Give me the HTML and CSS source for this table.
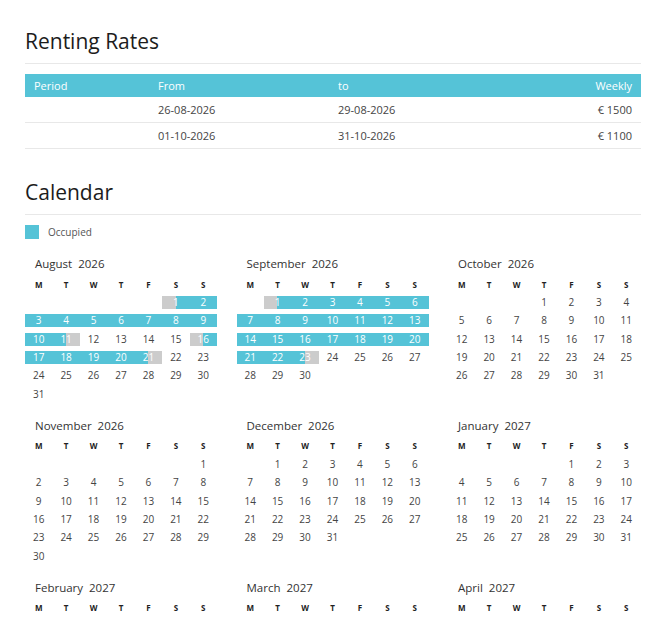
FILE: index.html
```html
<!DOCTYPE html>
<html>
<head>
<meta charset="utf-8">
<title>Renting Rates</title>
<link rel="stylesheet" href="styles.css">
</head>
<body>
<div class="page">
  <h2 class="heading">Renting Rates</h2>
  <hr class="rule">
  <table class="rates">
    <thead>
      <tr><th class="c1">Period</th><th class="c2">From</th><th class="c3">to</th><th class="c4">Weekly</th></tr>
    </thead>
    <tbody>
      <tr><td></td><td>26-08-2026</td><td>29-08-2026</td><td class="c4">€ 1500</td></tr>
      <tr><td></td><td>01-10-2026</td><td>31-10-2026</td><td class="c4">€ 1100</td></tr>
    </tbody>
  </table>

  <h2 class="heading cal-heading">Calendar</h2>
  <hr class="rule">
  <div class="legend"><span class="swatch"></span><span class="legend-label">Occupied</span></div>

  <div class="months">
    <div class="month">
      <div class="mtitle">August <span class="yr">2026</span></div>
      <div class="days">
        <span class="wd">M</span><span class="wd">T</span><span class="wd">W</span><span class="wd">T</span><span class="wd">F</span><span class="wd">S</span><span class="wd">S</span>
        <span></span><span></span><span></span><span></span><span></span><span class="s">1</span><span class="o">2</span>
        <span class="o">3</span><span class="o">4</span><span class="o">5</span><span class="o">6</span><span class="o">7</span><span class="o">8</span><span class="o">9</span>
        <span class="o">10</span><span class="e">11</span><span>12</span><span>13</span><span>14</span><span>15</span><span class="s">16</span>
        <span class="o">17</span><span class="o">18</span><span class="o">19</span><span class="o">20</span><span class="e">21</span><span>22</span><span>23</span>
        <span>24</span><span>25</span><span>26</span><span>27</span><span>28</span><span>29</span><span>30</span>
        <span>31</span>
      </div>
    </div>
    <div class="month">
      <div class="mtitle">September <span class="yr">2026</span></div>
      <div class="days">
        <span class="wd">M</span><span class="wd">T</span><span class="wd">W</span><span class="wd">T</span><span class="wd">F</span><span class="wd">S</span><span class="wd">S</span>
        <span></span><span class="s">1</span><span class="o">2</span><span class="o">3</span><span class="o">4</span><span class="o">5</span><span class="o">6</span>
        <span class="o">7</span><span class="o">8</span><span class="o">9</span><span class="o">10</span><span class="o">11</span><span class="o">12</span><span class="o">13</span>
        <span class="o">14</span><span class="o">15</span><span class="o">16</span><span class="o">17</span><span class="o">18</span><span class="o">19</span><span class="o">20</span>
        <span class="o">21</span><span class="o">22</span><span class="e">23</span><span>24</span><span>25</span><span>26</span><span>27</span>
        <span>28</span><span>29</span><span>30</span>
      </div>
    </div>
    <div class="month">
      <div class="mtitle">October <span class="yr">2026</span></div>
      <div class="days">
        <span class="wd">M</span><span class="wd">T</span><span class="wd">W</span><span class="wd">T</span><span class="wd">F</span><span class="wd">S</span><span class="wd">S</span>
        <span></span><span></span><span></span><span>1</span><span>2</span><span>3</span><span>4</span>
        <span>5</span><span>6</span><span>7</span><span>8</span><span>9</span><span>10</span><span>11</span>
        <span>12</span><span>13</span><span>14</span><span>15</span><span>16</span><span>17</span><span>18</span>
        <span>19</span><span>20</span><span>21</span><span>22</span><span>23</span><span>24</span><span>25</span>
        <span>26</span><span>27</span><span>28</span><span>29</span><span>30</span><span>31</span>
      </div>
    </div>
    <div class="month">
      <div class="mtitle">November <span class="yr">2026</span></div>
      <div class="days">
        <span class="wd">M</span><span class="wd">T</span><span class="wd">W</span><span class="wd">T</span><span class="wd">F</span><span class="wd">S</span><span class="wd">S</span>
        <span></span><span></span><span></span><span></span><span></span><span></span><span>1</span>
        <span>2</span><span>3</span><span>4</span><span>5</span><span>6</span><span>7</span><span>8</span>
        <span>9</span><span>10</span><span>11</span><span>12</span><span>13</span><span>14</span><span>15</span>
        <span>16</span><span>17</span><span>18</span><span>19</span><span>20</span><span>21</span><span>22</span>
        <span>23</span><span>24</span><span>25</span><span>26</span><span>27</span><span>28</span><span>29</span>
        <span>30</span>
      </div>
    </div>
    <div class="month">
      <div class="mtitle">December <span class="yr">2026</span></div>
      <div class="days">
        <span class="wd">M</span><span class="wd">T</span><span class="wd">W</span><span class="wd">T</span><span class="wd">F</span><span class="wd">S</span><span class="wd">S</span>
        <span></span><span>1</span><span>2</span><span>3</span><span>4</span><span>5</span><span>6</span>
        <span>7</span><span>8</span><span>9</span><span>10</span><span>11</span><span>12</span><span>13</span>
        <span>14</span><span>15</span><span>16</span><span>17</span><span>18</span><span>19</span><span>20</span>
        <span>21</span><span>22</span><span>23</span><span>24</span><span>25</span><span>26</span><span>27</span>
        <span>28</span><span>29</span><span>30</span><span>31</span>
      </div>
    </div>
    <div class="month">
      <div class="mtitle">January <span class="yr">2027</span></div>
      <div class="days">
        <span class="wd">M</span><span class="wd">T</span><span class="wd">W</span><span class="wd">T</span><span class="wd">F</span><span class="wd">S</span><span class="wd">S</span>
        <span></span><span></span><span></span><span></span><span>1</span><span>2</span><span>3</span>
        <span>4</span><span>5</span><span>6</span><span>7</span><span>8</span><span>9</span><span>10</span>
        <span>11</span><span>12</span><span>13</span><span>14</span><span>15</span><span>16</span><span>17</span>
        <span>18</span><span>19</span><span>20</span><span>21</span><span>22</span><span>23</span><span>24</span>
        <span>25</span><span>26</span><span>27</span><span>28</span><span>29</span><span>30</span><span>31</span>
      </div>
    </div>
    <div class="month">
      <div class="mtitle">February <span class="yr">2027</span></div>
      <div class="days">
        <span class="wd">M</span><span class="wd">T</span><span class="wd">W</span><span class="wd">T</span><span class="wd">F</span><span class="wd">S</span><span class="wd">S</span>
        <span>1</span><span>2</span><span>3</span><span>4</span><span>5</span><span>6</span><span>7</span>
        <span>8</span><span>9</span><span>10</span><span>11</span><span>12</span><span>13</span><span>14</span>
        <span>15</span><span>16</span><span>17</span><span>18</span><span>19</span><span>20</span><span>21</span>
        <span>22</span><span>23</span><span>24</span><span>25</span><span>26</span><span>27</span><span>28</span>
      </div>
    </div>
    <div class="month">
      <div class="mtitle">March <span class="yr">2027</span></div>
      <div class="days">
        <span class="wd">M</span><span class="wd">T</span><span class="wd">W</span><span class="wd">T</span><span class="wd">F</span><span class="wd">S</span><span class="wd">S</span>
        <span>1</span><span>2</span><span>3</span><span>4</span><span>5</span><span>6</span><span>7</span>
        <span>8</span><span>9</span><span>10</span><span>11</span><span>12</span><span>13</span><span>14</span>
        <span>15</span><span>16</span><span>17</span><span>18</span><span>19</span><span>20</span><span>21</span>
        <span>22</span><span>23</span><span>24</span><span>25</span><span>26</span><span>27</span><span>28</span>
        <span>29</span><span>30</span><span>31</span>
      </div>
    </div>
    <div class="month">
      <div class="mtitle">April <span class="yr">2027</span></div>
      <div class="days">
        <span class="wd">M</span><span class="wd">T</span><span class="wd">W</span><span class="wd">T</span><span class="wd">F</span><span class="wd">S</span><span class="wd">S</span>
        <span></span><span></span><span></span><span>1</span><span>2</span><span>3</span><span>4</span>
        <span>5</span><span>6</span><span>7</span><span>8</span><span>9</span><span>10</span><span>11</span>
        <span>12</span><span>13</span><span>14</span><span>15</span><span>16</span><span>17</span><span>18</span>
        <span>19</span><span>20</span><span>21</span><span>22</span><span>23</span><span>24</span><span>25</span>
        <span>26</span><span>27</span><span>28</span><span>29</span><span>30</span>
      </div>
    </div>
  </div>
</div>
</body>
</html>
```

FILE: styles.css
```css
html, body {
  margin: 0;
  padding: 0;
  background: #ffffff;
}

body {
  font-family: "Open Sans", "Noto Sans", sans-serif;
  color: #333333;
}

.page {
  width: 616px;
  padding: 29px 25px 40px 25px;
}

.heading {
  margin: 0;
  font-size: 21px;
  line-height: 25px;
  font-weight: 400;
  color: #1c1c1c;
}

.cal-heading {
  margin-top: 31px;
}

.rule {
  border: 0;
  border-top: 1px solid #e8e8e8;
  height: 0;
  margin: 9px 0 10px 0;
}

.rates {
  width: 100%;
  border-collapse: collapse;
  font-size: 11px;
  color: #444444;
}

.rates th {
  background: #55c3d7;
  color: #ffffff;
  font-weight: 400;
  height: 23px;
  padding: 0 9px;
  text-align: left;
}

.rates td {
  height: 25px;
  padding: 0 9px;
  border-bottom: 1px solid #e8e8e8;
}

.rates .c1 { width: 106px; }
.rates .c2 { width: 162px; }
.rates .c4 { text-align: right; }

.legend {
  display: flex;
  align-items: center;
  gap: 9px;
  margin-bottom: 17px;
}

.swatch {
  width: 14px;
  height: 14px;
  background: #55c3d7;
}

.legend-label {
  font-size: 10px;
  color: #555555;
}

.months {
  display: grid;
  grid-template-columns: repeat(3, 192px);
  column-gap: 19.5px;
  row-gap: 17px;
}

.mtitle {
  font-size: 11.5px;
  line-height: 16px;
  color: #333333;
  padding-left: 10px;
  margin-bottom: 5.5px;
}

.yr {
  margin-left: 3px;
}

.days {
  display: grid;
  grid-template-columns: repeat(7, 1fr);
  row-gap: 5.4px;
}

.days span {
  height: 13px;
  line-height: 13px;
  text-align: center;
  font-size: 10px;
  color: #444444;
}

.days .wd {
  font-size: 8px;
  font-weight: 700;
  color: #222222;
}

.days .o {
  background: #55c3d7;
  color: #ffffff;
}

.days .s {
  background: linear-gradient(to right, #cccccc 50%, #55c3d7 50%);
  color: #ffffff;
}

.days .e {
  background: linear-gradient(to right, #55c3d7 50%, #cccccc 50%);
  color: #ffffff;
}
```
